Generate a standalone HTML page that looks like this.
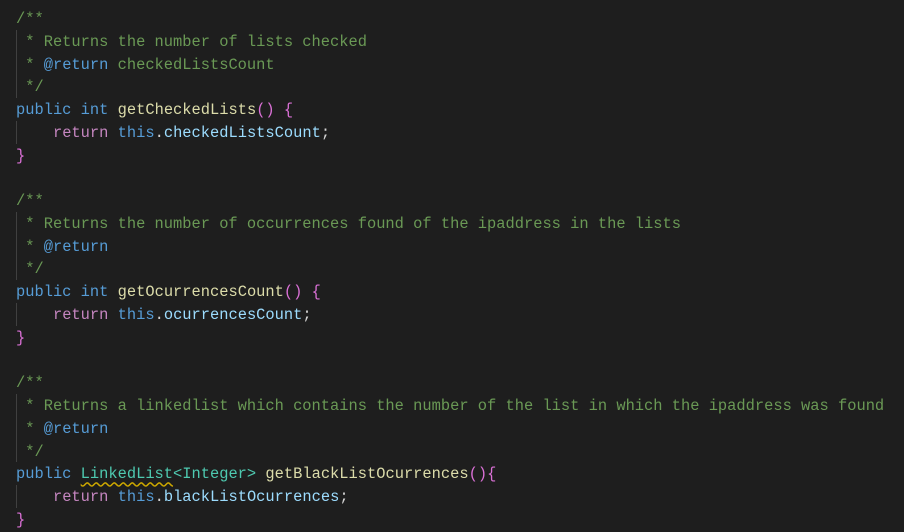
<!DOCTYPE html>
<html><head><style>
body{margin:0;background:#1e1e1e;width:904px;height:528px;overflow:hidden}
pre{margin:0;padding:8px 0 0 16px;font-family:"Liberation Mono",monospace;font-size:15.4px;line-height:22.77px;color:#d4d4d4;position:relative}
.c{color:#6a9955}.k{color:#569cd6}.r{color:#c586c0}.f{color:#dcdcaa}.v{color:#9cdcfe}.t{color:#4ec9b0}.b{color:#da70d6}
.g{position:absolute;left:16px;width:1px;background:#404040}
.sq{text-decoration:underline wavy #cca700;text-underline-offset:3px}
</style></head><body>
<pre><div class="g" style="top:30px;height:68px"></div><div class="g" style="top:121px;height:23px"></div><div class="g" style="top:212px;height:68px"></div><div class="g" style="top:303px;height:23px"></div><div class="g" style="top:394px;height:68px"></div><div class="g" style="top:485px;height:23px"></div><span class="c">/**
 * Returns the number of lists checked
 * <span class="k">@return</span> checkedListsCount
 */</span>
<span class="k">public</span> <span class="k">int</span> <span class="f">getCheckedLists</span><span class="b">()</span> <span class="b">{</span>
    <span class="r">return</span> <span class="k">this</span>.<span class="v">checkedListsCount</span>;
<span class="b">}</span>

<span class="c">/**
 * Returns the number of occurrences found of the ipaddress in the lists
 * <span class="k">@return</span>
 */</span>
<span class="k">public</span> <span class="k">int</span> <span class="f">getOcurrencesCount</span><span class="b">()</span> <span class="b">{</span>
    <span class="r">return</span> <span class="k">this</span>.<span class="v">ocurrencesCount</span>;
<span class="b">}</span>

<span class="c">/**
 * Returns a linkedlist which contains the number of the list in which the ipaddress was found
 * <span class="k">@return</span>
 */</span>
<span class="k">public</span> <span class="t sq">LinkedList</span><span class="t">&lt;Integer&gt;</span> <span class="f">getBlackListOcurrences</span><span class="b">(){</span>
    <span class="r">return</span> <span class="k">this</span>.<span class="v">blackListOcurrences</span>;
<span class="b">}</span></pre>
</body></html>
